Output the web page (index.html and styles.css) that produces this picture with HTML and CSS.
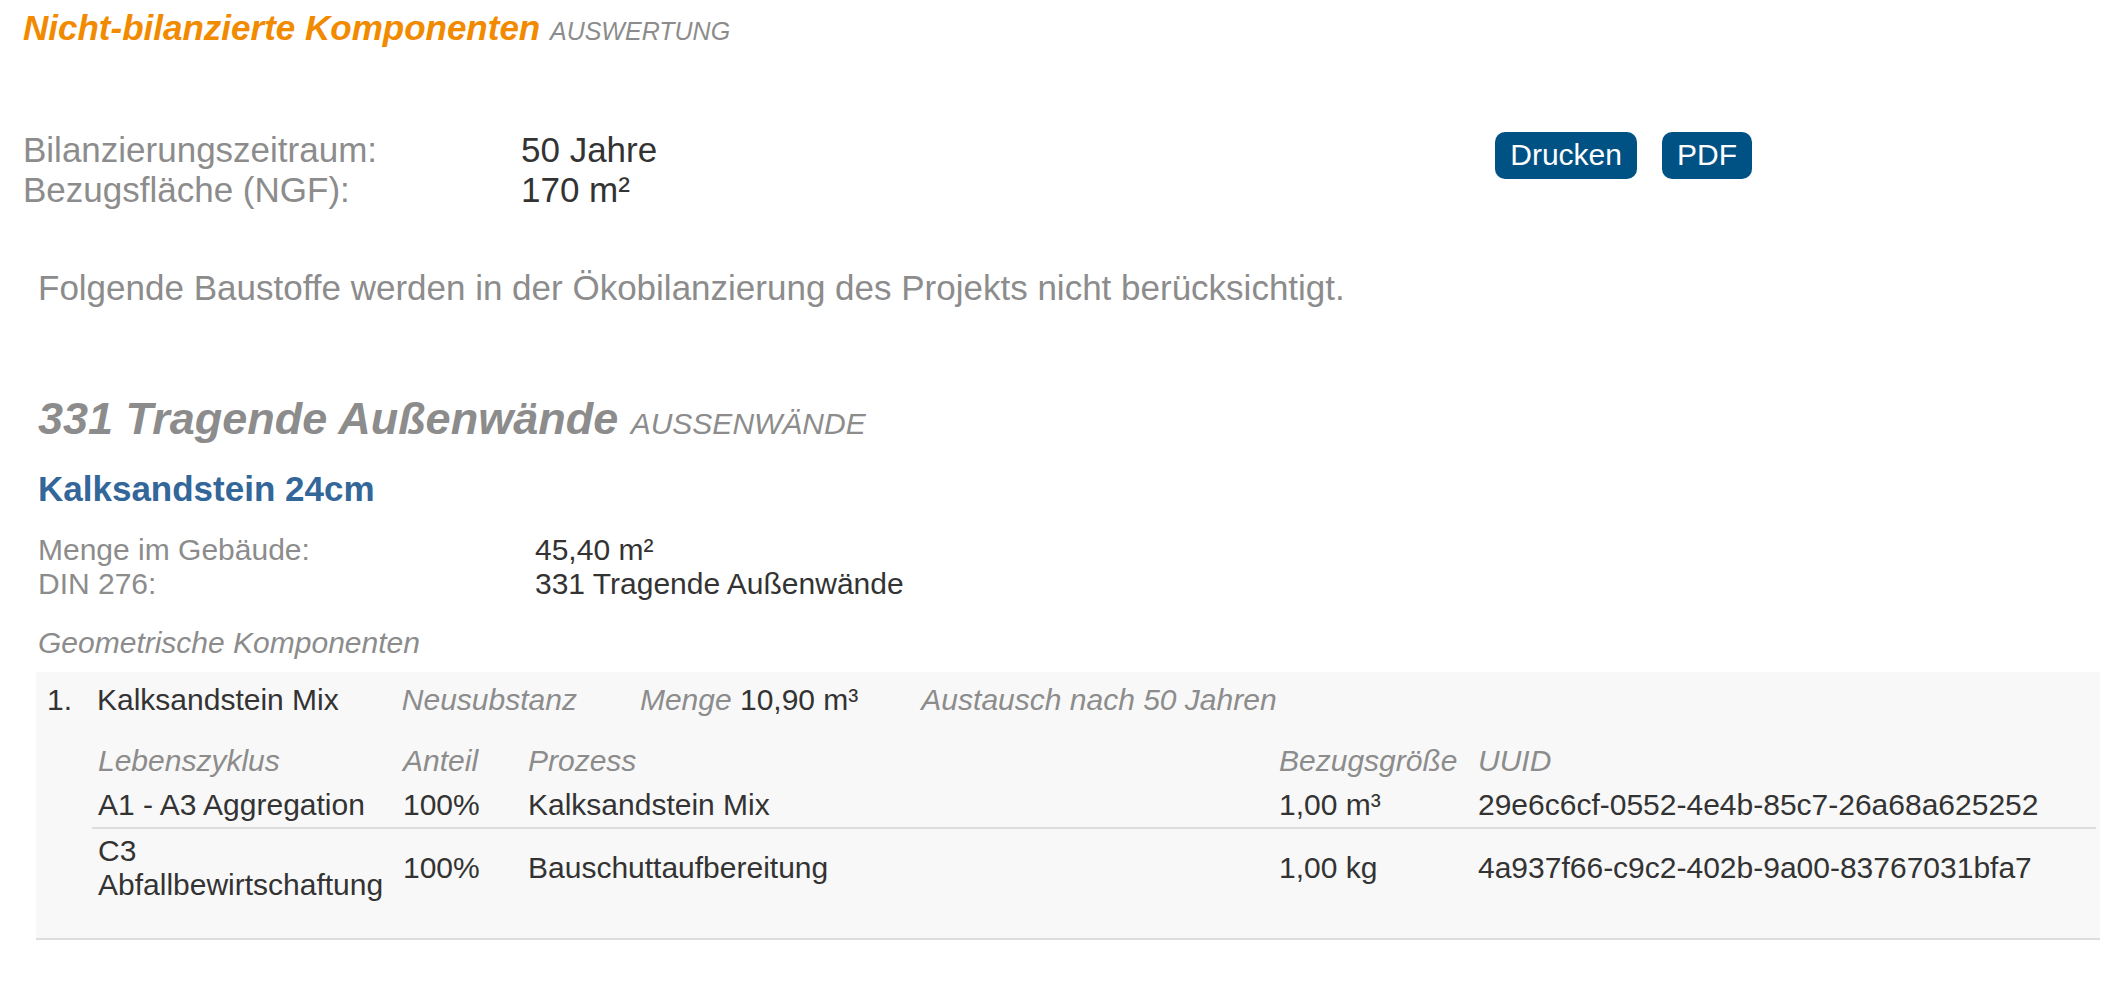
FILE: index.html
```html
<!DOCTYPE html>
<html lang="de">
<head>
<meta charset="utf-8">
<title>Nicht-bilanzierte Komponenten</title>
<link rel="stylesheet" href="styles.css">
</head>
<body>
<div class="page">
  <h1 class="title">Nicht-bilanzierte Komponenten <span class="title-sub">AUSWERTUNG</span></h1>

  <div class="meta">
    <dl class="meta-list">
      <dt>Bilanzierungszeitraum:</dt><dd>50 Jahre</dd>
      <dt>Bezugsfläche (NGF):</dt><dd>170 m²</dd>
    </dl>
    <div class="actions">
      <button class="btn" type="button">Drucken</button>
      <button class="btn" type="button">PDF</button>
    </div>
  </div>

  <div class="content">
    <p class="intro">Folgende Baustoffe werden in der Ökobilanzierung des Projekts nicht berücksichtigt.</p>

    <h2 class="group-title">331 Tragende Außenwände <span class="group-sub">AUSSENWÄNDE</span></h2>

    <h3 class="element-title">Kalksandstein 24cm</h3>

    <dl class="element-info">
      <dt>Menge im Gebäude:</dt><dd>45,40 m²</dd>
      <dt>DIN 276:</dt><dd>331 Tragende Außenwände</dd>
    </dl>

    <h4 class="comp-title">Geometrische Komponenten</h4>

    <div class="comp-box">
      <div class="comp-head">
        <span class="comp-num">1.</span>
        <span class="comp-name">Kalksandstein Mix</span>
        <span class="comp-attr muted">Neusubstanz</span>
        <span class="comp-attr"><span class="muted">Menge</span> 10,90 m³</span>
        <span class="comp-attr muted">Austausch nach 50 Jahren</span>
      </div>
      <table class="proc-table">
        <colgroup>
          <col class="c1"><col class="c2"><col class="c3"><col class="c4"><col class="c5">
        </colgroup>
        <thead>
          <tr><th>Lebenszyklus</th><th>Anteil</th><th>Prozess</th><th>Bezugsgröße</th><th>UUID</th></tr>
        </thead>
        <tbody>
          <tr class="sep"><td>A1 - A3 Aggregation</td><td>100%</td><td>Kalksandstein Mix</td><td>1,00 m³</td><td>29e6c6cf-0552-4e4b-85c7-26a68a625252</td></tr>
          <tr><td>C3 Abfallbewirtschaftung</td><td>100%</td><td>Bauschuttaufbereitung</td><td>1,00 kg</td><td>4a937f66-c9c2-402b-9a00-83767031bfa7</td></tr>
        </tbody>
      </table>
    </div>
  </div>
</div>
</body>
</html>
```

FILE: styles.css
```css
html, body {
  margin: 0;
  padding: 0;
  background: #ffffff;
}

body {
  font-family: "Liberation Sans", Arial, sans-serif;
  color: #333333;
}

.page {
  padding: 8px 13px 40px 23px;
}

.title {
  margin: 0;
  font-size: 35px;
  font-weight: bold;
  font-style: italic;
  color: #f28a00;
  line-height: normal;
}

.title-sub {
  font-size: 25px;
  font-weight: normal;
  color: #8c8c8c;
}

.meta {
  display: flex;
  justify-content: space-between;
  align-items: flex-start;
  width: 1729px;
  margin-top: 82px;
}

.meta-list {
  display: grid;
  grid-template-columns: 498px auto;
  margin: 0;
  font-size: 35px;
  line-height: normal;
}

.meta-list dt {
  color: #8c8c8c;
}

.meta-list dd {
  margin: 0;
  color: #333333;
}

.actions {
  display: flex;
  gap: 25px;
  margin-top: 2px;
}

.btn {
  font-family: "Liberation Sans", Arial, sans-serif;
  font-size: 30px;
  line-height: normal;
  color: #ffffff;
  background: #015284;
  border: none;
  border-radius: 10px;
  padding: 6px 15px 7px;
}

.content {
  padding-left: 15px;
}

.intro {
  margin: 58px 0 0;
  font-size: 35px;
  line-height: normal;
  color: #8c8c8c;
}

.group-title {
  margin: 85px 0 0;
  font-size: 45px;
  font-weight: bold;
  font-style: italic;
  color: #8c8c8c;
  line-height: normal;
}

.group-sub {
  font-size: 30px;
  font-weight: normal;
}

.element-title {
  margin: 24px 0 0;
  font-size: 35px;
  font-weight: bold;
  color: #336699;
  line-height: normal;
}

.element-info {
  display: grid;
  grid-template-columns: 497px auto;
  margin: 24px 0 0;
  font-size: 30px;
  line-height: normal;
}

.element-info dt {
  color: #8c8c8c;
}

.element-info dd {
  margin: 0;
  color: #333333;
}

.comp-title {
  margin: 25px 0 0;
  font-size: 30px;
  font-weight: normal;
  font-style: italic;
  color: #8c8c8c;
  line-height: normal;
}

.comp-box {
  margin: 12px 0 0 -2px;
  background: #f8f8f8;
  border-bottom: 2px solid #dddddd;
  padding: 11px 4px 31px 11px;
  font-size: 30px;
  line-height: normal;
}

.comp-head {
  display: flex;
  align-items: baseline;
}

.comp-num {
  flex: none;
  width: 50px;
}

.comp-attr {
  margin-left: 63px;
}

.muted {
  color: #8c8c8c;
  font-style: italic;
}

.proc-table {
  margin: 22px 0 0 45px;
  width: calc(100% - 45px);
  border-collapse: collapse;
  table-layout: fixed;
}

.proc-table .c1 { width: 305px; }
.proc-table .c2 { width: 125px; }
.proc-table .c3 { width: 751px; }
.proc-table .c4 { width: 199px; }
.proc-table .c5 { width: auto; }

.proc-table th,
.proc-table td {
  padding: 5px 2px 5px 6px;
  text-align: left;
  vertical-align: middle;
  font-weight: normal;
}

.proc-table th {
  font-style: italic;
  color: #8c8c8c;
}

.proc-table td {
  color: #333333;
}

.proc-table tr.sep td {
  border-bottom: 2px solid #dddddd;
}
```
